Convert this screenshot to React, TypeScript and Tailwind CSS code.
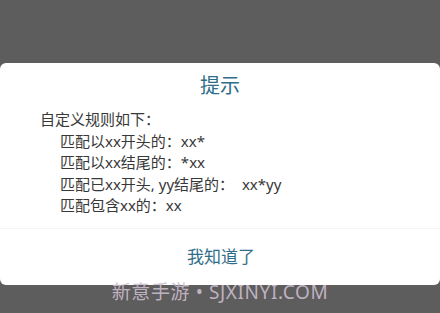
export default function App() {
  const rules = [
    '匹配以xx开头的：xx*',
    '匹配以xx结尾的：*xx',
    '匹配已xx开头, yy结尾的：  xx*yy',
    '匹配包含xx的：xx',
  ];

  return (
    <div
      className="relative h-[313px] w-[440px] overflow-hidden bg-[#5d5d5d] pt-[63px]"
      style={{ fontFamily: '"Noto Sans", "Noto Sans CJK SC", sans-serif' }}
    >
      <div className="rounded-md bg-white">
        <div className="flex h-[46px] items-center justify-center text-[20px] text-[#2f6e88]">提示</div>
        <div className="px-[40px] pb-[11px] text-[15px] leading-[21.5px] text-[#383838]">
          <div>自定义规则如下：</div>
          {rules.map((r) => (
            <div key={r} className="whitespace-pre pl-[20px]">
              {r}
            </div>
          ))}
        </div>
        <div className="flex h-[57px] items-center justify-center border-t border-[#f4f4f4] pl-[2px] text-[17px] text-[#2f6e88]">
          我知道了
        </div>
      </div>

      {/* watermark */}
      <div className="absolute left-0 right-0 top-[281px] flex justify-center text-[19px] leading-[22px] tracking-[0.6px] text-[#cdbdcd]/90">
        新意手游 • SJXINYI.COM
      </div>
    </div>
  );
}
